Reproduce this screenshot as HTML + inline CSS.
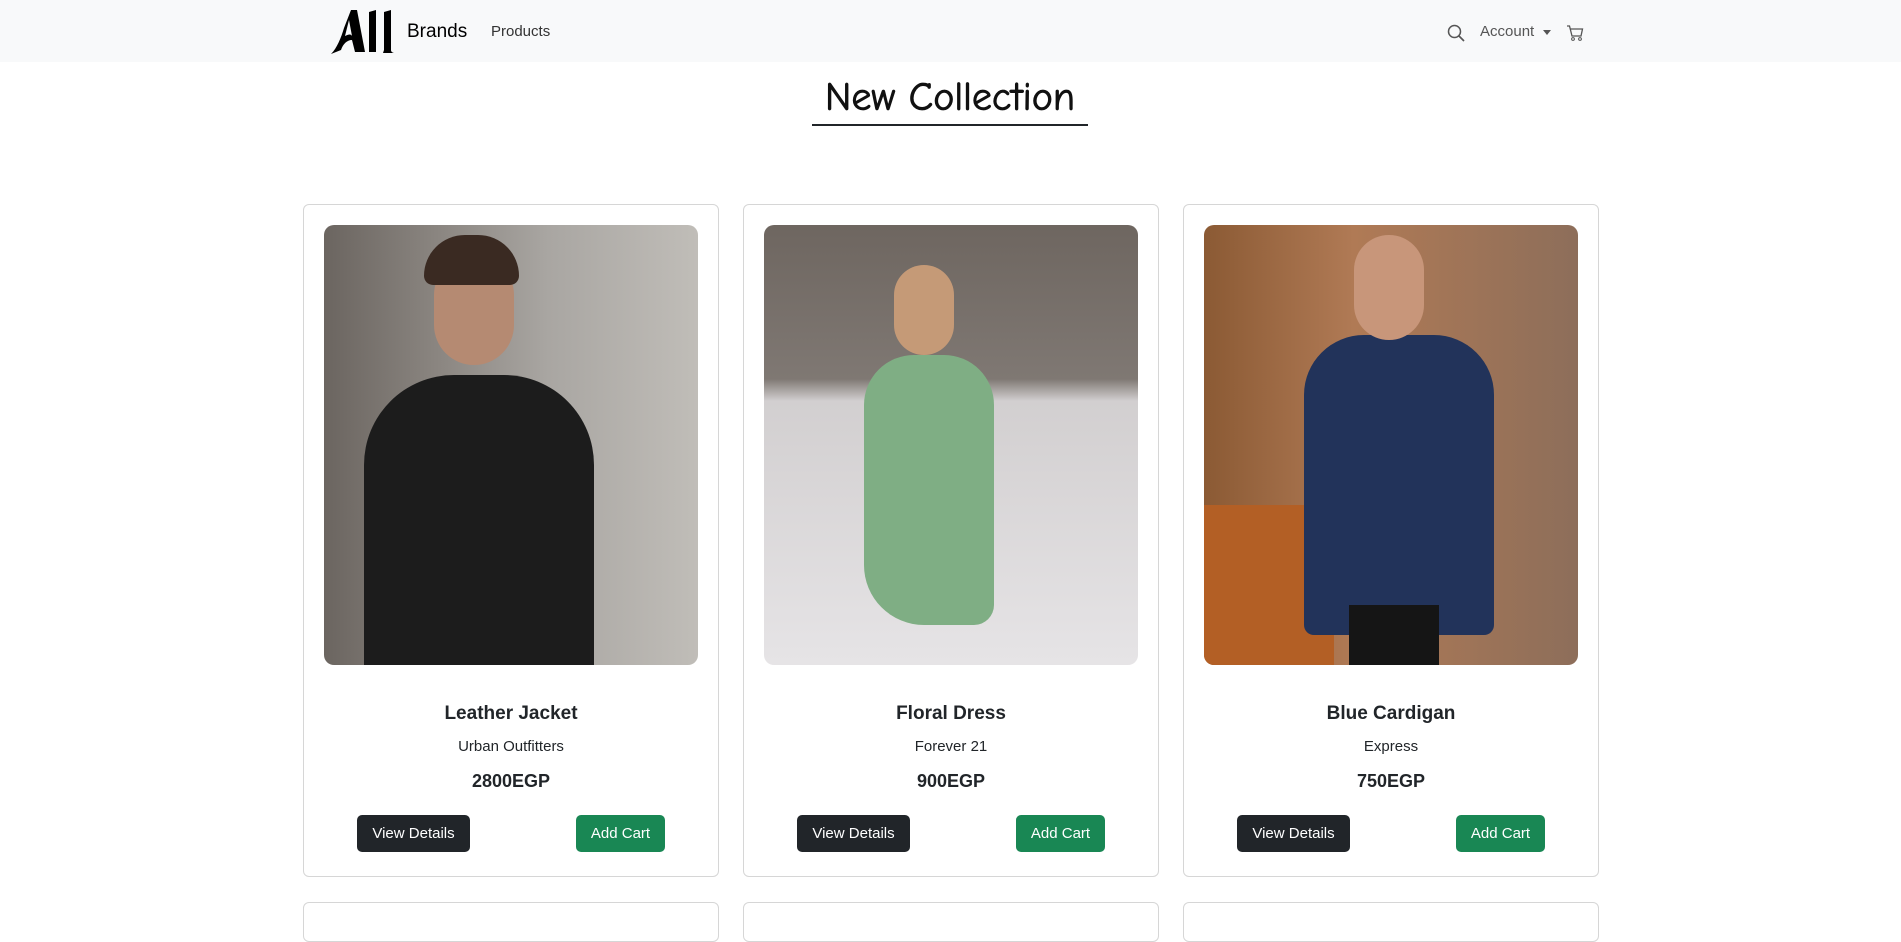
<!DOCTYPE html>
<html><head><meta charset="utf-8"><style>
*{box-sizing:border-box;margin:0;padding:0}
body{width:1901px;height:917px;overflow:hidden;background:#fff;font-family:"Segoe UI","Liberation Sans",sans-serif;color:#212529;position:relative}
.nav{position:absolute;left:0;top:0;width:1901px;height:62px;background:#f8f9fa}
.abs{position:absolute}
.title{position:absolute;left:812px;top:74px;width:276px;text-align:center;font-family:"Comic Sans MS","Comic Neue","DejaVu Sans",cursive;font-size:40px;color:#111;white-space:nowrap;-webkit-text-stroke:0.8px #111}
.uline{position:absolute;left:812px;top:124px;width:276px;height:2px;background:#212529}
.card{position:absolute;top:204px;width:416px;height:673px;border:1px solid #d6d6d6;border-radius:6px;background:#fff}
.card2{top:902px;height:40px}
.img{position:absolute;left:20px;top:20px;width:374px;height:440px;border-radius:10px;overflow:hidden}
.t{position:absolute;left:0;width:100%;text-align:center}
.name{top:498px;font-size:19px;font-weight:600}
.brand{top:533px;font-size:15px}
.price{top:566px;font-size:18px;font-weight:600}
.btn{position:absolute;top:610px;height:37px;border-radius:5px;color:#fff;font-size:15px;line-height:37px;text-align:center}
.vd{left:53px;width:113px;background:#212529}
.ac{left:272px;width:89px;background:#198754}
</style></head><body>
<div class="nav">
<svg class="abs" style="left:331px;top:10px" width="66" height="45" viewBox="0 0 66 45"><path d="M0 44 C6 38 10 28 13 18 L20 0 L26 0 L34 42 L24 42 L21 30 C16 30 12 34 10 40 Z M14 26 C18 24 20 24 21 26 L18 10 Z" fill="#000"/><path d="M38 2 L45 0 L45 42 L38 42 Z M53 2 L60 0 L60 40 C60 42 62 43 64 43 L52 43 L53 40 Z" fill="#000"/></svg>
<div class="abs" style="left:407px;top:21px;font-size:19px;color:#000">Brands</div>
<div class="abs" style="left:491px;top:23px;font-size:15px;color:#333">Products</div>
<svg class="abs" style="left:1447px;top:24px" width="18" height="18" viewBox="0 0 18 18"><circle cx="7.5" cy="7.5" r="6" fill="none" stroke="#555" stroke-width="1.5"/><path d="M12 12 L17 17" stroke="#555" stroke-width="1.7"/></svg>
<div class="abs" style="left:1480px;top:23px;font-size:15px;color:#555">Account</div>
<div class="abs" style="left:1543px;top:30px;width:0;height:0;border-left:4px solid transparent;border-right:4px solid transparent;border-top:5px solid #555"></div>
<svg class="abs" style="left:1566px;top:24px" width="18" height="18" viewBox="0 0 18 18"><path d="M1 2 H3.5 L6 12 H15 L16.5 5 H4.5" fill="none" stroke="#555" stroke-width="1.3"/><circle cx="7" cy="15" r="1.4" fill="none" stroke="#555"/><circle cx="14" cy="15" r="1.4" fill="none" stroke="#555"/></svg>
</div>
<div class="title">New Collection</div>
<div class="uline"></div>

<div class="card" style="left:303px">
<div class="img" style="background:linear-gradient(90deg,#6b6560 0%,#8a8580 30%,#a9a6a2 60%,#c0bdb8 100%)">
<div class="abs" style="left:40px;top:150px;width:230px;height:300px;background:#1c1c1c;border-radius:90px 90px 0 0"></div>
<div class="abs" style="left:110px;top:30px;width:80px;height:110px;background:#b58a72;border-radius:40px"></div>
<div class="abs" style="left:100px;top:10px;width:95px;height:50px;background:#3a2a22;border-radius:45px 45px 10px 10px"></div>
</div>
<div class="t name">Leather Jacket</div><div class="t brand">Urban Outfitters</div><div class="t price">2800EGP</div>
<div class="btn vd">View Details</div><div class="btn ac">Add Cart</div></div>

<div class="card" style="left:743px">
<div class="img" style="background:linear-gradient(180deg,#6e6660 0%,#7f7873 35%,#d2cfd0 40%,#e6e4e6 100%)">
<div class="abs" style="left:130px;top:40px;width:60px;height:90px;background:#c59a77;border-radius:30px"></div>
<div class="abs" style="left:100px;top:130px;width:130px;height:270px;background:#7fae84;border-radius:50px 50px 20px 60px"></div>
</div>
<div class="t name">Floral Dress</div><div class="t brand">Forever 21</div><div class="t price">900EGP</div>
<div class="btn vd">View Details</div><div class="btn ac">Add Cart</div></div>

<div class="card" style="left:1183px">
<div class="img" style="background:linear-gradient(90deg,#8b5a34 0%,#b07a55 40%,#8d6e5a 100%)">
<div class="abs" style="left:0;top:280px;width:130px;height:160px;background:#b35f25"></div>
<div class="abs" style="left:100px;top:110px;width:190px;height:300px;background:#22335a;border-radius:60px 60px 10px 10px"></div>
<div class="abs" style="left:150px;top:10px;width:70px;height:105px;background:#c8967a;border-radius:35px"></div>
<div class="abs" style="left:145px;top:380px;width:90px;height:60px;background:#151515"></div>
</div>
<div class="t name">Blue Cardigan</div><div class="t brand">Express</div><div class="t price">750EGP</div>
<div class="btn vd">View Details</div><div class="btn ac">Add Cart</div></div>

<div class="card card2" style="left:303px"></div>
<div class="card card2" style="left:743px"></div>
<div class="card card2" style="left:1183px"></div>
</body></html>
